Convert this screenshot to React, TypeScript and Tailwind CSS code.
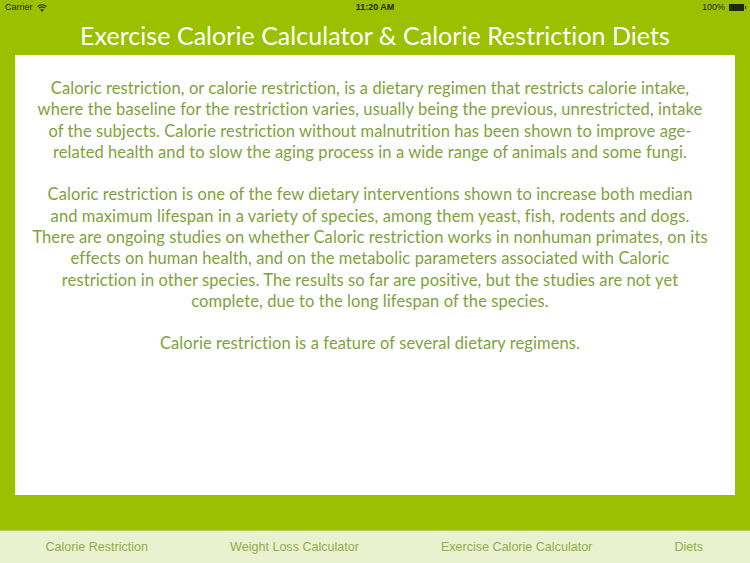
import React from "react";

const paragraphs = [
  [
    "Caloric restriction, or calorie restriction, is a dietary regimen that restricts calorie intake,",
    "where the baseline for the restriction varies, usually being the previous, unrestricted, intake",
    "of the subjects. Calorie restriction without malnutrition has been shown to improve age-",
    "related health and to slow the aging process in a wide range of animals and some fungi.",
  ],
  [
    "Caloric restriction is one of the few dietary interventions shown to increase both median",
    "and maximum lifespan in a variety of species, among them yeast, fish, rodents and dogs.",
    "There are ongoing studies on whether Caloric restriction works in nonhuman primates, on its",
    "effects on human health, and on the metabolic parameters associated with Caloric",
    "restriction in other species. The results so far are positive, but the studies are not yet",
    "complete, due to the long lifespan of the species.",
  ],
  ["Calorie restriction is a feature of several dietary regimens."],
];

const tabs = ["Calorie Restriction", "Weight Loss Calculator", "Exercise Calorie Calculator", "Diets"];

const StatusBar = () => (
  <div className="relative flex h-[15px] items-center justify-between pl-[5px] pr-[4px] text-[9px] text-[#1c2a00] font-['Liberation_Sans',sans-serif]">
    <div className="flex items-center gap-[4px]">
      <span>Carrier</span>
      <svg width="10" height="8" viewBox="0 0 10 8" fill="none" stroke="#1c2a00" strokeWidth="1.1">
        <path d="M0.5 2.6 A6.4 6.4 0 0 1 9.5 2.6" />
        <path d="M2 4.2 A4.2 4.2 0 0 1 8 4.2" />
        <path d="M5 7.8 L3.3 5.8 A2.4 2.4 0 0 1 6.7 5.8 Z" fill="#1c2a00" stroke="none" />
      </svg>
    </div>
    <span className="absolute left-0 right-0 text-center font-bold">11:20 AM</span>
    <div className="flex items-center gap-[1px]">
      <span className="mr-[3px]">100%</span>
      <div className="h-[7px] w-[15px] bg-[#1c2a00]" />
      <div className="h-[3px] w-[1px] bg-[#1c2a00]" />
    </div>
  </div>
);

export default function App() {
  return (
    <div className="flex h-[563px] w-[750px] flex-col overflow-hidden bg-[#9bc000] font-['Lato',sans-serif]">
      <StatusBar />
      <h1 className="flex h-[40px] items-center justify-center pt-[2px] text-[25px] font-normal tracking-[0.04px] text-white">
        Exercise Calorie Calculator &amp; Calorie Restriction Diets
      </h1>
      <div className="mx-[15px] flex h-[440px] flex-col gap-[20.6px] bg-white pr-[10px] pt-[23px] text-center text-[16.5px] leading-[21.4px] tracking-[0.09px] text-[#7fa23c] [font-variant-ligatures:none]">
        {paragraphs.map((lines, i) => (
          <p key={i}>
            {lines.map((line) => (
              <span key={line} className="block whitespace-nowrap">
                {line}
              </span>
            ))}
          </p>
        ))}
      </div>
      <div className="mt-auto flex h-[33px] items-center justify-between border-t border-[#b4cf5c] bg-[#e9f1cf] pl-[45.5px] pr-[47px] text-[12.55px] text-[#8fae50] font-['Liberation_Sans',sans-serif]">
        {tabs.map((tab) => (
          <span key={tab}>{tab}</span>
        ))}
      </div>
    </div>
  );
}
